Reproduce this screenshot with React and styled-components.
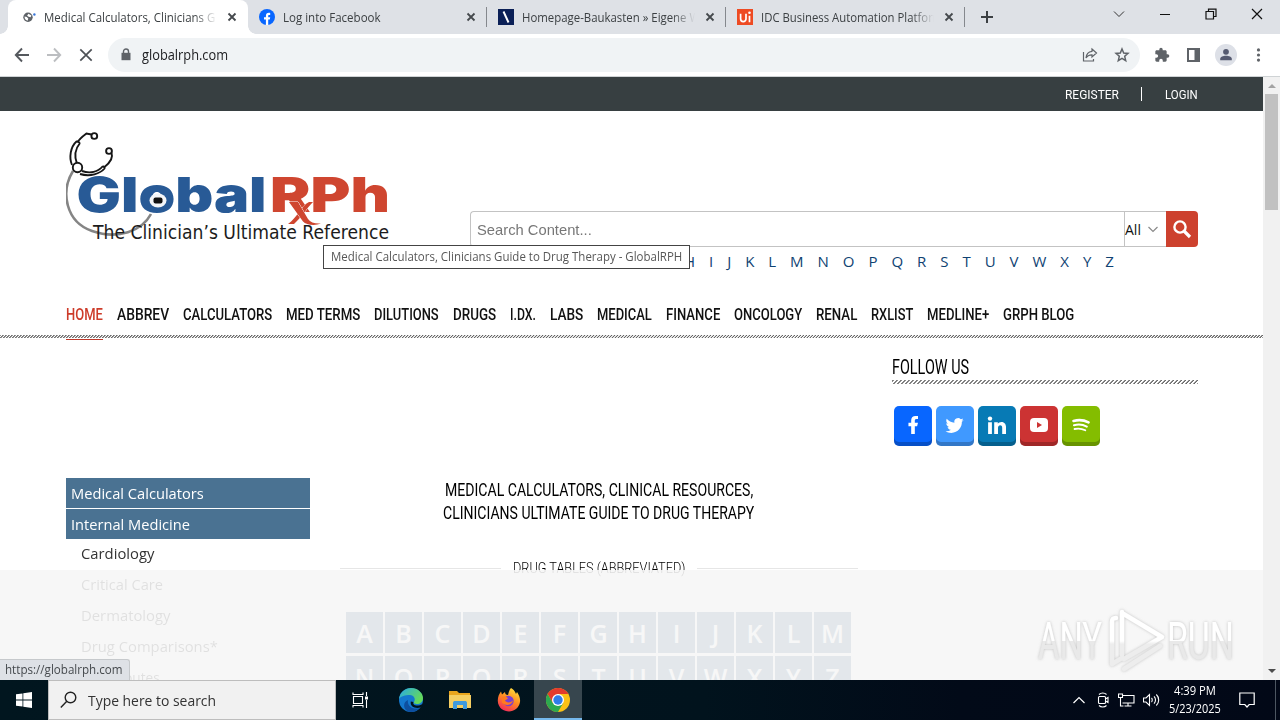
import React, { useLayoutEffect, useRef } from "react";
import styled, { createGlobalStyle, css } from "styled-components";

const Global = createGlobalStyle`
  * { box-sizing: border-box; }
  body { margin: 0; background: #fff; font-family: "Open Sans", "Liberation Sans", sans-serif; overflow: hidden; }
  svg { display: block; flex: none; }
`;

/* ---------- text that fills a fixed measure ---------- */
const FitBox = styled.span`
  display: inline-block;
  flex: none;
  width: ${(p) => p.$w}px;
  white-space: nowrap;
`;
const FitInner = styled.span`
  display: inline-block;
  transform-origin: 0 50%;
  white-space: nowrap;
`;
function Fit({ w, children }) {
  const ref = useRef(null);
  useLayoutEffect(() => {
    const el = ref.current;
    el.style.transform = `scaleX(${w / el.offsetWidth})`;
  }, [w, children]);
  return (
    <FitBox $w={w}>
      <FitInner ref={ref}>{children}</FitInner>
    </FitBox>
  );
}

/* ---------- window ---------- */
const Screen = styled.div`
  width: 1280px;
  height: 720px;
  display: flex;
  flex-direction: column;
  overflow: hidden;
`;
const TabStrip = styled.div`
  height: 34px;
  flex: none;
  display: flex;
  background: #dee1e6;
  padding-left: 8px;
`;
const Tab = styled.div`
  position: relative;
  width: ${(p) => (p.$active ? 240 : 239)}px;
  height: 34px;
  display: flex;
  align-items: center;
  padding-left: ${(p) => (p.$active ? 14 : 11)}px;
  font-size: 12px;
  color: #3c4043;
  ${(p) =>
    p.$active &&
    css`
      background: #fff;
      border-radius: 8px 8px 0 0;
      &::before, &::after {
        content: "";
        position: absolute;
        bottom: 0;
        width: 8px;
        height: 8px;
      }
      &::before { left: -8px; background: radial-gradient(circle at 0 0, transparent 7.5px, #fff 8px); }
      &::after { right: -8px; background: radial-gradient(circle at 100% 0, transparent 7.5px, #fff 8px); }
    `}
`;
const TabTitle = styled.div`
  width: ${(p) => (p.$wide ? 172 : 173)}px;
  margin-left: ${(p) => (p.$wide ? 6 : 8)}px;
  overflow: hidden;
  white-space: nowrap;
  mask-image: linear-gradient(90deg, #000 150px, transparent 173px);
`;
const CloseSlot = styled.div`
  margin-left: ${(p) => (p.$wide ? 12 : 11)}px;
`;
const TabRule = styled.div`
  width: 1px;
  height: 20px;
  margin: 7px 0 0 -1px;
  background: #85888d;
`;
const NewTab = styled.div`
  padding: 11px 0 0 16px;
`;
const WindowButtons = styled.div`
  margin-left: auto;
  display: flex;
  align-items: flex-start;
  padding: 8px 17px 0 0;
  gap: 34px;
`;
const Toolbar = styled.div`
  height: 43px;
  flex: none;
  display: flex;
  align-items: center;
  background: #fff;
  border-bottom: 1px solid #cfd3d5;
  padding-left: 14px;
`;
const NavButtons = styled.div`
  display: flex;
  gap: 16px;
  width: 94px;
`;
const Omnibox = styled.div`
  width: 1032px;
  height: 34px;
  border-radius: 17px;
  background: #f0f3f5;
  display: flex;
  align-items: center;
  padding: 0 10px 0 12px;
  font-size: 14px;
  color: #202124;
`;
const Url = styled.div`
  margin-left: 10px;
  padding-bottom: 1px;
  flex: 1;
`;
const OmniIcons = styled.div`
  display: flex;
  gap: 16px;
`;
const Extensions = styled.div`
  display: flex;
  align-items: center;
  margin-left: 14px;
  gap: 13px;
`;

/* ---------- page ---------- */
const Viewport = styled.div`
  position: relative;
  height: 603px;
  flex: none;
  display: flex;
`;
const Page = styled.div`
  position: relative;
  width: 1263px;
  height: 603px;
  overflow: hidden;
  background: #fff;
`;
const TopBar = styled.div`
  height: 34px;
  background: #373f41;
  color: #fff;
  display: flex;
  justify-content: flex-end;
  align-items: center;
  padding-right: 65px;
  font: 400 13.5px Roboto, sans-serif;
`;
const Divider = styled.div`
  width: 1px;
  height: 14px;
  margin: 0 23px 0 22px;
  background: #fff;
`;
const Header = styled.header`
  height: 181px;
  display: flex;
  padding: 19px 65px 0 66px;
`;
const LogoSlot = styled.div`
  width: 404px;
  flex: none;
`;
const SearchArea = styled.div`
  width: 728px;
  padding-top: 81px;
`;
const SearchRow = styled.div`
  height: 36px;
  display: flex;
`;
const SearchInput = styled.div`
  width: 654px;
  border: 1px solid #c3c3c3;
  border-right: 0;
  border-radius: 4px 0 0 4px;
  padding: 0 6px;
  display: flex;
  align-items: center;
  font: 15px "Liberation Sans", sans-serif;
  color: #777;
`;
const SearchSelect = styled.div`
  width: 42px;
  border: 1px solid #c3c3c3;
  border-right: 0;
  display: flex;
  align-items: center;
  justify-content: space-between;
  padding: 1px 7px 0 0;
  font-size: 14px;
  color: #111;
`;
const SearchButton = styled.div`
  width: 32px;
  background: #cd412e;
  border-radius: 0 4px 4px 0;
  display: flex;
  align-items: center;
  justify-content: center;
`;
const LetterLinks = styled.div`
  display: flex;
  justify-content: space-between;
  width: 430px;
  margin-left: 214px;
  height: 29px;
  line-height: 29px;
  font-size: 15px;
  color: #0f4272;
`;
const NavBar = styled.nav`
  height: 43px;
  display: flex;
  gap: 14px;
  padding: 0 66px;
  align-items: center;
`;
const NavItem = styled.div`
  height: 43px;
  line-height: 45px;
  font-family: Roboto, sans-serif;
  font-size: 16.5px;
  font-weight: 500;
  color: ${(p) => (p.$active ? "#cd3c2a" : "#111")};
`;
const Hatch = styled.div`
  height: ${(p) => p.$h}px;
  background: repeating-linear-gradient(-45deg, #666 0 0.5px, #fff 1.1px ${(p) => p.$period - 0.5}px, #666 ${(p) => p.$period}px);
`;
const ActiveMark = styled.div`
  width: 37px;
  height: 1px;
  margin: 1px 0 0 66px;
  background: #c0392b;
`;
const Body = styled.main`
  display: flex;
  padding-left: 66px;
`;
const Sidebar = styled.div`
  width: 244px;
  padding-top: 138px;
`;
const SideHead = styled.div`
  height: 30px;
  margin-bottom: ${(p) => (p.$last ? 0 : 1)}px;
  background: #4a7292;
  color: #fff;
  font-size: 15px;
  line-height: 31px;
  padding-left: 5px;
`;
const SideItem = styled.div`
  height: 31px;
  line-height: 29px;
  font-size: 15px;
  color: #333;
  padding-left: 15px;
`;
const Content = styled.div`
  width: 518px;
  margin-left: 30px;
  padding-top: 138px;
`;
const Title = styled.h1`
  margin: 0;
  display: flex;
  flex-direction: column;
  align-items: center;
  padding-right: 1px;
  font: 400 19px/23px Roboto, sans-serif;
  color: #000;
`;
const SectionHead = styled.div`
  display: flex;
  align-items: center;
  justify-content: space-between;
  height: 20px;
  margin-top: 33px;
  font: 300 15px/16px Roboto, sans-serif;
  color: #000;
`;
const SectionLabel = styled.div`
  padding-top: 2px;
`;
const Rule = styled.div`
  width: 161px;
  height: 1px;
  margin-top: 3px;
  background: #e6e6e6;
`;
const TileGrid = styled.div`
  margin: 35px 0 0 6px;
  display: grid;
  grid-template-columns: repeat(13, 37px);
  gap: 3px 2px;
`;
const Tile = styled.div`
  height: 41px;
  background: #4a7292;
  color: #fff;
  font-size: 25px;
  font-weight: 600;
  line-height: 42px;
  text-align: center;
`;
const Aside = styled.aside`
  width: 306px;
  margin-left: 34px;
  padding-top: 15px;
`;
const AsideTitle = styled.h2`
  margin: 0;
  height: 25px;
  font: 400 20px/25px Roboto, sans-serif;
  color: #000;
`;
const SocialRow = styled.div`
  display: flex;
  gap: 4px;
  padding: 22px 0 0 2px;
`;
const SocialButton = styled.div`
  width: 38px;
  height: 40px;
  border-radius: 5px;
  background: ${(p) => p.$bg};
  box-shadow: inset 0 -4px 0 rgba(0, 0, 0, 0.22);
  display: flex;
  align-items: center;
  justify-content: center;
  padding: 0 1px 2px 0;
`;
const Tooltip = styled.div`
  position: absolute;
  left: 323px;
  top: 168px;
  width: 367px;
  height: 24px;
  padding-left: 7px;
  border: 1px solid #444;
  background: #fff;
  color: #575757;
  font-size: 12px;
  line-height: 22px;
`;
const Veil = styled.div`
  position: absolute;
  left: 0;
  right: 0;
  bottom: 0;
  height: 110px;
  background: rgba(246, 246, 246, 0.892);
`;
const StatusBubble = styled.div`
  position: absolute;
  left: 0;
  bottom: 0;
  width: 130px;
  height: 21px;
  padding-left: 5px;
  background: #dee1e6;
  border: 1px solid #c6c9cc;
  border-width: 1px 1px 0 0;
  border-radius: 0 3px 0 0;
  color: #45494d;
  font-size: 12px;
  line-height: 20px;
`;
const Watermark = styled.div`
  position: absolute;
  left: 1030px;
  top: 525px;
`;
const Scrollbar = styled.div`
  width: 17px;
  background: #f1f1f1;
  display: flex;
  flex-direction: column;
  align-items: center;
  padding: 7px 0 7px;
`;
const Thumb = styled.div`
  width: 13px;
  height: 116px;
  margin: 6px 0 auto;
  background: #c1c1c1;
`;

/* ---------- taskbar ---------- */
const Taskbar = styled.div`
  height: 40px;
  flex: none;
  display: flex;
  background: linear-gradient(90deg, #01161f 0, #01131d 55%, #020a18 75%, #020817);
`;
const TaskSlot = styled.div`
  width: ${(p) => p.$w || 49}px;
  display: flex;
  align-items: center;
  justify-content: center;
  background: ${(p) => (p.$active ? "#37464e" : "none")};
  border-bottom: ${(p) => (p.$active ? "2px solid #76b9ed" : "0")};
  padding-top: ${(p) => (p.$active ? 2 : 0)}px;
`;
const TaskSearch = styled.div`
  width: 288px;
  display: flex;
  align-items: center;
  gap: 11px;
  padding-left: 11px;
  background: #f1f1f1;
  border: 1px solid #bdbdbd;
  font-size: 15px;
  color: #333;
`;
const Tray = styled.div`
  margin-left: auto;
  display: flex;
  align-items: center;
  color: #fff;
`;
const TrayIcons = styled.div`
  display: flex;
  align-items: center;
  gap: 8px;
  margin-right: 8px;
`;
const Clock = styled.div`
  width: 54px;
  display: flex;
  flex-direction: column;
  align-items: center;
  font-size: 12px;
  line-height: 18px;
`;
const NoticeSlot = styled.div`
  margin: 0 20px 0 17px;
`;
const DesktopEdge = styled.div`
  width: 1px;
  height: 40px;
  margin-right: 4px;
  background: #4d5661;
`;

/* ---------- drawings ---------- */
const Cross = () => (
  <svg width="8" height="8" viewBox="0 0 8 8" stroke="#45494d" strokeWidth="1.8" overflow="visible">
    <path d="M.5.5l7 7M7.5.5l-7 7" />
  </svg>
);
const fPath = "M14 13.5h2.5l1-4H14v-2c0-1.03 0-2 2-2h1.5V2.14c-.326-.043-1.557-.14-2.857-.14C11.928 2 10 3.657 10 6.7v2.8H7v4h3V22h4z";

const GlobeIcon = () => (
  <svg width="16" height="16" viewBox="0 0 16 16">
    <circle cx="6" cy="8.200" r="4.700" fill="#5f6368" />
    <path d="M2.600 7.600l2.200.5 1.500 1.500-.7 2.200C3.500 11.200 2.400 9.800 2.600 7.600zM6.400 4.800l3 1.700-.8 1.700-2-.5-1.500-1z" fill="#fff" />
    <circle cx="12.400" cy="5.500" r="1.200" fill="#3b78d8" />
  </svg>
);
const FacebookIcon = () => (
  <svg width="16" height="16" viewBox="0 0 16 16">
    <circle cx="8" cy="8" r="8" fill="#0866ff" />
    <path d="M6.900 16v-5.400H5V8.200h1.900V6.900c0-2 1-3.100 3-3.100.5 0 1 .1 1.300.2V6h-1c-.8 0-1 .4-1 1v1.200h2l-.4 2.400H9.200V16z" fill="#fff" />
  </svg>
);
const BuilderIcon = () => (
  <svg width="16" height="16" viewBox="0 0 16 16">
    <path d="M0 0h16v16H0z" fill="#0b2057" />
    <path d="M5.500 2.500l5 11" stroke="#fff" strokeWidth="1.900" />
  </svg>
);
const UiIcon = () => (
  <svg width="16" height="16" viewBox="0 0 16 16">
    <path d="M0 0h16v16H0z" fill="#ee4b23" />
    <path d="M3.600 4.800v5c0 3.700 5.400 3.700 5.400 0v-5M12.500 6.800v6.400" fill="none" stroke="#fff" strokeWidth="1.700" />
    <circle cx="12.500" cy="3.800" r="1.300" fill="#fff" />
  </svg>
);

const Logo = () => (
  <svg width="326" height="116" viewBox="66 130 326 116">
    <path d="M73 171C60 192 66 222 92 231C118 240 142 231 151 214" fill="none" stroke="#858585" strokeWidth="2.600" />
    <g fill="none" stroke="#161616" strokeWidth="1.900">
      <circle cx="94.300" cy="136" r="2.900" />
      <path d="M91.500 134.500l-5-1c-4 3-7 5-9 9" />
      <path d="M77 141c-7 6-8 17-5 24M80 143c-5 6-6 13-3 21M77 141l3 2" />
      <circle cx="77.500" cy="167.500" r="4.700" fill="#fff" />
      <path d="M82 171c8 3 16 1 21-5M80 174c10 3 20 0 25-6M103 166l2 2" />
      <circle cx="109" cy="151" r="2.900" />
      <path d="M111.500 153c2 5-2 10-7 14" />
    </g>
    <g fontFamily="Inter, sans-serif" fontWeight="900" fontSize="48">
      <text x="76.500" y="212" textLength="190" lengthAdjust="spacingAndGlyphs" fill="#285a96">Global</text>
      <text x="270" y="212" textLength="120" lengthAdjust="spacingAndGlyphs" fill="#cf4630">RPh</text>
    </g>
    <ellipse cx="158" cy="200.500" rx="8.500" ry="7" fill="#f4f6f8" />
    <rect x="153.500" y="197.500" width="9" height="6" rx="2" fill="#111" />
    <g stroke="#fff" strokeWidth="3" paintOrder="stroke" fill="#cf4630">
      <path d="M313 202h-4c-8 4-12 16-21 22h6c7-6 12-15 19-22z" strokeWidth="1" />
      <path d="M289 202h9l10 17c2.500 3.500 7 5 13 4.500-6 2.500-15 1.500-18-2z" strokeWidth="1" />
    </g>
    <text x="93" y="239" textLength="296" lengthAdjust="spacingAndGlyphs" fontFamily="DejaVu Sans, sans-serif" fontSize="19.500" fill="#1c1c1c">
      The Clinician’s Ultimate Reference
    </text>
  </svg>
);

const AnyRun = () => (
  <svg width="210" height="75" viewBox="1030 602 210 75">
    <defs>
      <filter id="glow" x="-20%" y="-20%" width="140%" height="140%">
        <feDropShadow dx="0" dy="0" stdDeviation="1.600" floodColor="#999" floodOpacity=".6" />
      </filter>
      <linearGradient id="fade" x1="0" y1="0" x2="0" y2="1">
        <stop offset=".5" stopColor="#fff" />
        <stop offset=".5" stopColor="#e9e9e9" />
      </linearGradient>
      <linearGradient id="fadeMark" gradientUnits="userSpaceOnUse" x1="0" y1="610" x2="0" y2="672">
        <stop offset=".5" stopColor="#fff" />
        <stop offset=".55" stopColor="#ededed" />
      </linearGradient>
    </defs>
    <g filter="url(#glow)">
      <g fontFamily="Roboto, sans-serif" fontSize="51" fill="url(#fade)">
        <text x="1038" y="659" textLength="64" lengthAdjust="spacingAndGlyphs">ANY</text>
        <text x="1167" y="659" textLength="67" lengthAdjust="spacingAndGlyphs">RUN</text>
      </g>
      <g fill="none" stroke="url(#fadeMark)" strokeWidth="4.500" strokeLinejoin="round" strokeLinecap="round">
        <path d="M1122 655V613l40 24-38 22M1122 612v42" />
        <path d="M1116 618c-3 0-4 1-4 4v42l10-6M1124 669l36-23" />
      </g>
    </g>
  </svg>
);

const EdgeIcon = () => (
  <svg width="24" height="24" viewBox="0 0 24 24">
    <defs>
      <linearGradient id="e1" x1="0" y1="0" x2="1" y2=".5">
        <stop offset="0" stopColor="#27a9e8" />
        <stop offset="1" stopColor="#65d95a" />
      </linearGradient>
    </defs>
    <circle cx="12" cy="12" r="12" fill="#1478cf" />
    <path d="M0 11C1 4 6 0 12 0c7 0 12 5 12 10 0 4-3 6-6 6-2 0-4-1-3-2 2-3 0-7-4-7-5 0-9 1-11 4z" fill="url(#e1)" />
    <path d="M9 12c-1 6 4 10 12 8-4 4-9 5-13 3-4-3-4-9 1-11z" fill="#0d4fa0" />
    <path d="M14.500 14c-1 2 1 4 5 3.500 2-.2 3-1 4.500-2-.5 2-1 3-2.200 4-6 1.500-11-1-10-6z" fill="#01131d" />
  </svg>
);
const FolderIcon = () => (
  <svg width="22" height="20" viewBox="0 0 22 20">
    <path d="M0 1h8l2 2h11v4H0z" fill="#e9a51d" />
    <path d="M0 5h22v13H0z" fill="#f5ce62" />
    <path d="M4 19v-6c0-1.500 1-2 2-2h10c1 0 2 .5 2 2v6h-4v-4H8v4z" fill="#3f9ade" />
  </svg>
);
const FirefoxIcon = () => (
  <svg width="24" height="24" viewBox="0 0 24 24">
    <defs>
      <linearGradient id="ff" x1=".8" y1="0" x2=".3" y2="1">
        <stop offset="0" stopColor="#ffe33f" />
        <stop offset=".5" stopColor="#ff8a21" />
        <stop offset="1" stopColor="#f2295b" />
      </linearGradient>
    </defs>
    <path d="M14 0c2 1 4 3 5 6l1-2c2 3 3.500 6 3 10-1 6-6 9.500-11 9.500S1 20 .8 13C.7 9 2 6 4 3.500l1 3L8 4c0 2 1 3 3 3 1-3 1-5 3-7z" fill="url(#ff)" />
    <circle cx="11.500" cy="13" r="5.200" fill="#7a3fd0" />
    <path d="M5 9c3-1 5 0 6 1.500l-3 2c1 2 5 3 8 0-1 5-8 6-11 2z" fill="#ff7a1f" />
  </svg>
);
const ChromeIcon = () => (
  <svg width="24" height="24" viewBox="0 0 24 24">
    <circle cx="12" cy="12" r="12" fill="#fbc116" />
    <path d="M1.600 6A12 12 0 0 1 22.400 6H12L6.800 15z" fill="#e33b2e" />
    <path d="M1.600 6A12 12 0 0 0 12 24l5.200-9H6.800z" fill="#2da94f" />
    <circle cx="12" cy="12" r="6" fill="#fff" />
    <circle cx="12" cy="12" r="4.700" fill="#2f7de9" />
  </svg>
);

/* ---------- data ---------- */
const tabs = [
  { icon: <FacebookIcon />, title: "Log into Facebook", w: 98 },
  { icon: <BuilderIcon />, title: "Homepage-Baukasten » Eigene Website", w: 210 },
  { icon: <UiIcon />, title: "IDC Business Automation Platforms", w: 188 },
];
const nav = [
  ["HOME", 37], ["ABBREV", 52], ["CALCULATORS", 89], ["MED TERMS", 74], ["DILUTIONS", 65],
  ["DRUGS", 43], ["I.DX.", 26], ["LABS", 33], ["MEDICAL", 55], ["FINANCE", 54], ["ONCOLOGY", 68],
  ["RENAL", 41], ["RXLIST", 42], ["MEDLINE+", 62], ["GRPH BLOG", 71],
];
const specialties = [["Cardiology", 73], ["Critical Care", 82], ["Dermatology", 90], ["Drug Comparisons*", 137], ["Drug Routes", 79]];
const alphabet = "ABCDEFGHIJKLMNOPQRSTUVWXYZ".split("");

export default function App() {
  return (
    <>
      <Global />
      <Screen>
        <TabStrip>
          <Tab $active>
            <GlobeIcon />
            <TabTitle $wide><Fit w={195}>Medical Calculators, Clinicians Guide</Fit></TabTitle>
            <CloseSlot $wide><Cross /></CloseSlot>
          </Tab>
          {tabs.map((t) => (
            <React.Fragment key={t.title}>
              <Tab>
                {t.icon}
                <TabTitle><Fit w={t.w}>{t.title}</Fit></TabTitle>
                <CloseSlot><Cross /></CloseSlot>
              </Tab>
              <TabRule />
            </React.Fragment>
          ))}
          <NewTab>
            <svg width="12" height="12" stroke="#3c4043" strokeWidth="2"><path d="M6 0v12M0 6h12" /></svg>
          </NewTab>
          <WindowButtons>
            <svg width="12" height="13" fill="none" stroke="#333"><path d="M1 3.500l5 5 5-5" /></svg>
            <svg width="12" height="13" stroke="#111"><path d="M1 6.500h10" /></svg>
            <svg width="12" height="13" fill="none" stroke="#111" strokeWidth="1.200"><path d="M1 3.500h7.500V11H1zM3.500 3.500V1.200H11v7.300H8.500" /></svg>
            <svg width="12" height="13" stroke="#111" strokeWidth="1.200"><path d="M1 1l10 10M11 1L1 11" /></svg>
          </WindowButtons>
        </TabStrip>

        <Toolbar>
          <NavButtons>
            <svg width="16" height="16" fill="none" stroke="#55595e" strokeWidth="1.900"><path d="M15 8H2M8 1.500L1.800 8 8 14.500" /></svg>
            <svg width="16" height="16" fill="none" stroke="#bcbec1" strokeWidth="1.900"><path d="M1 8h13M8 1.500L14.200 8 8 14.500" /></svg>
            <svg width="16" height="16" fill="none" stroke="#4d5156" strokeWidth="1.700"><path d="M2.300 2.300l11.400 11.400M13.700 2.300L2.300 13.700" /></svg>
          </NavButtons>
          <Omnibox>
            <svg width="12" height="14" viewBox="0 0 12 14"><path d="M3.500 5V3.500a2.500 2.500 0 0 1 5 0V5" fill="none" stroke="#5f6368" strokeWidth="1.400" /><path d="M1.500 4.800h9v7.400h-9z" fill="#5f6368" /></svg>
            <Url><Fit w={86}>globalrph.com</Fit></Url>
            <OmniIcons>
              <svg width="16" height="16" fill="none" stroke="#5f6368" strokeWidth="1.200"><path d="M1.500 5v9h10v-2M10 2l4.500 4L10 10V7.800C7 7.700 5.300 8.600 4 11c.3-4 2.500-6.300 6-6.700z" /></svg>
              <svg width="16" height="16" fill="none" stroke="#5f6368" strokeWidth="1.500"><path d="M8 2l1.700 4 4.300.4-3.300 2.900 1 4.300L8 11.300l-3.700 2.300 1-4.300L2 6.400 6.300 6z" /></svg>
            </OmniIcons>
          </Omnibox>
          <Extensions>
            <svg width="16" height="16" viewBox="0 0 24 24" fill="#5f6368"><path d="M20.500 11H19V7c0-1.100-.9-2-2-2h-4V3.500a2.500 2.500 0 0 0-5 0V5H4c-1.100 0-2 .9-2 2v3.800h1.500a2.700 2.700 0 0 1 0 5.400H2V20c0 1.100.9 2 2 2h3.800v-1.500a2.700 2.700 0 0 1 5.400 0V22H17c1.100 0 2-.9 2-2v-4h1.500a2.500 2.500 0 0 0 0-5z" /></svg>
            <svg width="19" height="16"><path d="M5 2h11v12H5z" fill="none" stroke="#5f6368" strokeWidth="2" /><path d="M11.500 2h5v12h-5z" fill="#5f6368" /></svg>
            <svg width="22" height="22"><circle cx="11" cy="11" r="11" fill="#dde0e7" /><circle cx="11" cy="7.800" r="2.900" fill="#555a70" /><path d="M5.200 16.300v-1.500c0-4.200 11.600-4.200 11.600 0v1.500z" fill="#555a70" /></svg>
            <svg width="16" height="16" fill="#5f6368"><circle cx="8.500" cy="2.900" r="1.600" /><circle cx="8.500" cy="8" r="1.600" /><circle cx="8.500" cy="13.100" r="1.600" /></svg>
          </Extensions>
        </Toolbar>

        <Viewport>
          <Page>
            <TopBar>
              <Fit w={54}>REGISTER</Fit>
              <Divider />
              <Fit w={33}>LOGIN</Fit>
            </TopBar>
            <Header>
              <LogoSlot><Logo /></LogoSlot>
              <SearchArea>
                <SearchRow>
                  <SearchInput><Fit w={115}>Search Content...</Fit></SearchInput>
                  <SearchSelect>
                    <Fit w={16}>All</Fit>
                    <svg width="12" height="8" fill="none" stroke="#8a8a8a" strokeWidth="1.200"><path d="M1.500 1l4.500 4.500L10.500 1" /></svg>
                  </SearchSelect>
                  <SearchButton>
                    <svg width="20" height="20" fill="none" stroke="#fff" strokeWidth="2.400"><circle cx="8" cy="8" r="5.600" /><path d="M12 12l6 6" strokeWidth="3.200" /></svg>
                  </SearchButton>
                </SearchRow>
                <LetterLinks>{alphabet.slice(7).map((l) => <span key={l}>{l}</span>)}</LetterLinks>
              </SearchArea>
            </Header>
            <NavBar>
              {nav.map(([label, w], i) => (
                <NavItem key={label} $active={i === 0}><Fit w={w}>{label}</Fit></NavItem>
              ))}
            </NavBar>
            <Hatch $h={3} $period={2.12} />
            <ActiveMark />
            <Body>
              <Sidebar>
                <SideHead><Fit w={133}>Medical Calculators</Fit></SideHead>
                <SideHead $last><Fit w={119}>Internal Medicine</Fit></SideHead>
                {specialties.map(([s, w]) => <SideItem key={s}><Fit w={w}>{s}</Fit></SideItem>)}
              </Sidebar>
              <Content>
                <Title>
                  <Fit w={308}>MEDICAL CALCULATORS, CLINICAL RESOURCES,</Fit>
                  <Fit w={311}>CLINICIANS ULTIMATE GUIDE TO DRUG THERAPY</Fit>
                </Title>
                <SectionHead>
                  <Rule />
                  <SectionLabel><Fit w={172}>DRUG TABLES (ABBREVIATED)</Fit></SectionLabel>
                  <Rule />
                </SectionHead>
                <TileGrid>{alphabet.map((l) => <Tile key={l}>{l}</Tile>)}</TileGrid>
              </Content>
              <Aside>
                <AsideTitle><Fit w={77}>FOLLOW US</Fit></AsideTitle>
                <Hatch $h={4} $period={2.83} />
                <SocialRow>
                  <SocialButton $bg="#0866ff"><svg width="22" height="20" viewBox="0 1 24 22" fill="#fff"><path d={fPath} /></svg></SocialButton>
                  <SocialButton $bg="#4099ff"><svg width="19" height="19" viewBox="0 0 24 24" fill="#fff"><path d="M23.600 4.900c-.8.400-1.700.6-2.700.8 1-.6 1.700-1.500 2-2.600-.9.500-1.900.9-3 1.100a4.700 4.700 0 0 0-8 4.300C8 8.300 4.500 6.400 2.200 3.600c-1.200 2.100-.6 4.900 1.500 6.300-.8 0-1.500-.2-2.100-.6 0 2.200 1.500 4.200 3.700 4.700-.7.200-1.400.2-2.100.1.600 1.900 2.300 3.200 4.400 3.300A9.500 9.500 0 0 1 .7 19.300c2.100 1.300 4.600 2.100 7.200 2.100 8.700 0 13.700-7.400 13.400-14 .9-.7 1.700-1.500 2.300-2.500z" /></svg></SocialButton>
                  <SocialButton $bg="#077ab5"><svg width="20" height="19" viewBox="0 0 20 19" fill="#fff"><circle cx="3" cy="2.600" r="2.200" /><path d="M1.100 6.200h3.800V18H1.100zM7.200 6.200h3.600v1.600c1.700-3 8.200-2.800 8.200 3V18h-3.800v-6.300c0-3.400-4.200-3.100-4.200 0V18H7.200z" /></svg></SocialButton>
                  <SocialButton $bg="#cc3333"><svg width="18" height="14"><rect width="18" height="14" rx="4" fill="#fff" /><path d="M7 4l5 3-5 3z" fill="#cc3333" /></svg></SocialButton>
                  <SocialButton $bg="#84bd00"><svg width="18" height="14" fill="none" stroke="#fff" strokeLinecap="round"><path d="M1.500 3c5-1.500 10.500-1 15 1.400" strokeWidth="2.600" /><path d="M2 7.200c4.500-1.200 9-.7 12.800 1.400" strokeWidth="2.100" /><path d="M2.500 11c3.800-.9 7.500-.4 10.800 1.300" strokeWidth="1.800" /></svg></SocialButton>
                </SocialRow>
              </Aside>
            </Body>
            <Tooltip><Fit w={351}>Medical Calculators, Clinicians Guide to Drug Therapy - GlobalRPH</Fit></Tooltip>
            <Veil />
            <StatusBubble><Fit w={118}>https://globalrph.com</Fit></StatusBubble>
            <Watermark><AnyRun /></Watermark>
          </Page>
          <Scrollbar>
            <svg width="8" height="4"><path d="M0 4l4-4 4 4z" fill="#a3a3a3" /></svg>
            <Thumb />
            <svg width="8" height="4"><path d="M0 0l4 4 4-4z" fill="#4c4c4c" /></svg>
          </Scrollbar>
        </Viewport>

        <Taskbar>
          <TaskSlot $w={48}>
            <svg width="16" height="16" fill="#fff"><path d="M0 2.300l6.500-.9v6.200H0zM7.300 1.200L16 0v7.600H7.300zM0 8.400h6.500v6.200L0 13.700zM7.300 8.400H16V16l-8.700-1.200z" /></svg>
          </TaskSlot>
          <TaskSearch>
            <svg width="17" height="18" fill="none" stroke="#222" strokeWidth="1.400"><circle cx="10.500" cy="6.500" r="5.300" /><path d="M6.800 10.300L.8 16.500" /></svg>
            <Fit w={128}>Type here to search</Fit>
          </TaskSearch>
          <TaskSlot $w={49}>
            <svg width="17" height="16" fill="none" stroke="#fff" strokeWidth="1.100"><path d="M1.500 4.500h9v7h-9zM1 .5v2h10v-2M1 15.500v-2h10v2M14.500 0v4M14.500 8v8" /><path d="M13 4.500h3v3h-3z" fill="#fff" stroke="none" /></svg>
          </TaskSlot>
          <TaskSlot $w={51}><EdgeIcon /></TaskSlot>
          <TaskSlot $w={47}><FolderIcon /></TaskSlot>
          <TaskSlot $w={51}><FirefoxIcon /></TaskSlot>
          <TaskSlot $w={48} $active><ChromeIcon /></TaskSlot>
          <Tray>
            <TrayIcons>
              <svg width="14" height="8" fill="none" stroke="#fff" strokeWidth="1.200"><path d="M1.500 7L7 1.500 12.500 7" /></svg>
              <svg width="16" height="16" fill="none" stroke="#fff" strokeWidth="1.100"><rect x="4.500" y="4.500" width="7" height="7" rx="1" /><path d="M11.500 7L14 5.500v5L11.500 9M5 2.500c2-2 5.500-2 7.500 0M5 13.500c2 2 5.500 2 7.500 0" /></svg>
              <svg width="17" height="14" fill="none" stroke="#fff" strokeWidth="1.100"><path d="M5 2.500h11v7.500H4.500M10 10v3M6.500 13h7M.5 1h4v3.500h-4zM2.500 4.500V13h3" /></svg>
              <svg width="17" height="14" fill="none" stroke="#fff" strokeWidth="1.100"><path d="M.5 5h2.500l3.500-3.500v11L3 9H.5zM8.500 5c1 1 1 3 0 4M11 3.300c2 2 2 5.400 0 7.400M13.300 1.500c3.200 3 3.200 8 0 11" /></svg>
            </TrayIcons>
            <Clock>
              <Fit w={42}>4:39 PM</Fit>
              <Fit w={52}>5/23/2025</Fit>
            </Clock>
            <NoticeSlot>
              <svg width="16" height="16" fill="none" stroke="#fff" strokeWidth="1.200"><path d="M.8 1h14.400v11.500h-5L8 15l-2.200-2.500h-5z" /></svg>
            </NoticeSlot>
            <DesktopEdge />
          </Tray>
        </Taskbar>
      </Screen>
    </>
  );
}
